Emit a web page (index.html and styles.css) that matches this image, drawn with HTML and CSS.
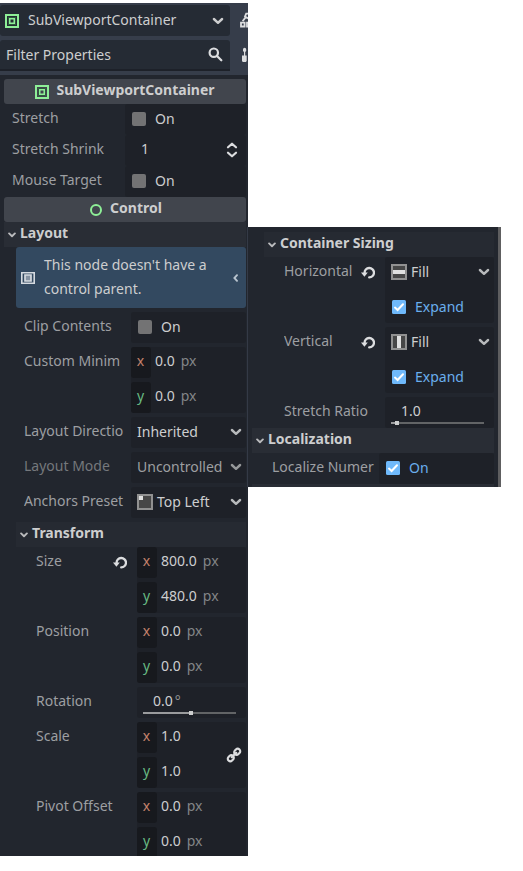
FILE: index.html
```html
<!DOCTYPE html>
<html lang="en">
<head>
<meta charset="utf-8">
<title>Inspector</title>
<link rel="stylesheet" href="styles.css">
</head>
<body>
<svg class="defs" width="0" height="0">
  <symbol id="chev" viewBox="0 0 12 8"><path d="M1.9 2 6 5.8 10.1 2" fill="none" stroke="currentColor" stroke-width="2.4" stroke-linecap="round" stroke-linejoin="round"/></symbol>
  <symbol id="fold" viewBox="0 0 8 6"><path d="M1.1 1.4 4 4.2 6.9 1.4" fill="none" stroke="currentColor" stroke-width="1.9" stroke-linecap="round" stroke-linejoin="round"/></symbol>
  <symbol id="sub" viewBox="0 0 14 14"><path d="M1 1h12v12H1zM4.5 4.5h5v5h-5z" fill="none" stroke="#8eef97" stroke-width="2"/><path d="M3.5 3.5h7v7h-7z" fill="none" stroke="#2d5a3c" stroke-width="1"/></symbol>
  <symbol id="undo" viewBox="0 0 14 13"><path d="M3.6 7A4.7 4.7 0 1 1 8.2 11.4" fill="none" stroke="#dcdddf" stroke-width="2.3" stroke-linecap="round"/><path d="M0 6.5h6.8L3.4 10.8z" fill="#dcdddf"/></symbol>
  <symbol id="tick" viewBox="0 0 14 14"><rect width="14" height="14" rx="1.5" fill="#6fb9fb"/><path d="M3 7.6 5.6 10 11 4.2" fill="none" stroke="#fff" stroke-width="2" stroke-linecap="round"/></symbol>
</svg>
<div class="stage">
  <section class="left">
    <header class="top">
      <div class="picker"><svg width="14" height="14"><use href="#sub"/></svg><span>SubViewportContainer</span><svg class="end" width="12" height="8"><use href="#chev"/></svg></div>
      <svg class="tool-doc" width="8" height="17" viewBox="0 0 8 17"><path d="M1 10.7h3.6v3.8H1zM7 10.7h3v3.8H7z" fill="none" stroke="#dcdddf" stroke-width="1.8"/><path d="M2.6 9.2 5.4 5.6M8 1.6H6.2L5 4.4 8 6.4" fill="none" stroke="#dcdddf" stroke-width="1.8"/></svg>
      <div class="filter"><span>Filter Properties</span><svg class="end" width="15" height="15" viewBox="0 0 15 15"><circle cx="5.8" cy="5.7" r="4.2" fill="none" stroke="#dcdddf" stroke-width="2.2"/><path d="m9 9 4.3 4.2" stroke="#dcdddf" stroke-width="2.3" stroke-linecap="round"/></svg></div>
      <svg class="tool-set" width="8" height="16" viewBox="0 0 8 16"><path d="M3 2.4a1.6 1.6 0 0 1 3.2 0V4L5.2 5v3.5h1.5V14l-.8 1H2.8L2 14V8.500H4V5L3 4z" fill="#dcdddf"/></svg>
    </header>
    <div class="body">
      <h2 class="cat"><svg class="low" width="14" height="14"><use href="#sub"/></svg><span>SubViewportContainer</span></h2>
      <div class="row joined w121"><label>Stretch</label><div class="field check"><i class="box"></i><span>On</span></div></div>
      <div class="row joined w121"><label>Stretch Shrink</label><div class="field num spin"><span>1</span><svg class="end" width="12" height="16" viewBox="0 0 12 16"><path d="m2 5.3 4-3.6 4 3.6M2 10.7l4 3.6 4-3.6" fill="none" stroke="#dcdddf" stroke-width="2.2" stroke-linecap="round" stroke-linejoin="round"/></svg></div></div>
      <div class="row joined w121"><label>Mouse Target</label><div class="field check"><i class="box"></i><span>On</span></div></div>
      <h2 class="cat control"><i class="ring"></i><span>Control</span></h2>
      <h3 class="sec"><svg width="8" height="6"><use href="#fold"/></svg><span>Layout</span></h3>
      <div class="notice"><svg width="14" height="14" viewBox="0 0 14 14"><path d="M.8 1.8h12.4v10.4H.8z" fill="none" stroke="#d5dae0" stroke-width="1.6"/><path d="M4 4h6v6H4z" fill="#8793a2" stroke="#d5dae0" stroke-width="1.7"/></svg><p>This node doesn't have a control parent.</p><svg class="back" width="5" height="8" viewBox="0 0 5 8"><path d="M4 1.2 1.4 4 4 6.8" fill="none" stroke="#b9c4cf" stroke-width="1.9" stroke-linecap="round"/></svg></div>
      <div class="row in1 w115"><label>Clip Contents</label><div class="field check"><i class="box"></i><span>On</span></div></div>
      <div class="row in1 w115 tall"><label>Custom Minim</label><div class="field vec"><div><b class="x">x</b><span>0.0</span><em>px</em></div><div><b class="y">y</b><span>0.0</span><em>px</em></div></div></div>
      <div class="row in1 w115"><label>Layout Directio</label><div class="field option"><span>Inherited</span><svg class="end" width="12" height="8"><use href="#chev"/></svg></div></div>
      <div class="row in1 w115 off"><label>Layout Mode</label><div class="field option"><span>Uncontrolled</span><svg class="end" width="12" height="8"><use href="#chev"/></svg></div></div>
      <div class="row in1 w115"><label>Anchors Preset</label><div class="field option"><svg class="pre" width="16" height="16" viewBox="0 0 16 16"><path d="M1 1h14v14H1z" fill="#474747" stroke="#919191" stroke-width="2"/><path d="M2 2h4v4H2z" fill="#e0e0e0"/></svg><span>Top Left</span><svg class="end" width="12" height="8"><use href="#chev"/></svg></div></div>
      <h3 class="sec nested"><svg width="8" height="6"><use href="#fold"/></svg><span>Transform</span></h3>
      <div class="row in2 w109 tall"><label>Size</label><svg class="undo" width="14" height="13"><use href="#undo"/></svg><div class="field vec"><div><b class="x">x</b><span>800.0</span><em>px</em></div><div><b class="y">y</b><span>480.0</span><em>px</em></div></div></div>
      <div class="row in2 w109 tall"><label>Position</label><div class="field vec"><div><b class="x">x</b><span>0.0</span><em>px</em></div><div><b class="y">y</b><span>0.0</span><em>px</em></div></div></div>
      <div class="row in2 w109"><label>Rotation</label><div class="field num slider"><span>0.0</span><em class="deg">°</em><div class="track mid"><i></i></div></div></div>
      <div class="row in2 w109 tall"><label>Scale</label><div class="field vec"><div><b class="x">x</b><span>1.0</span></div><div><b class="y">y</b><span>1.0</span></div><svg class="link" width="16" height="16" viewBox="0 0 16 16"><g fill="none" stroke="#dcdddf" stroke-width="2.2" stroke-linecap="round"><rect x="-3.2" y="-2.5" width="6.4" height="5" rx="2.5" transform="translate(11.2 4.8) rotate(-45)"/><rect x="-3.2" y="-2.5" width="6.4" height="5" rx="2.5" transform="translate(4.8 11.2) rotate(-45)"/><path d="m5.8 10.2 4.4-4.4"/></g></svg></div></div>
      <div class="row in2 w109 tall"><label>Pivot Offset</label><div class="field vec"><div><b class="x">x</b><span>0.0</span><em>px</em></div><div><b class="y">y</b><span>0.0</span><em>px</em></div></div></div>
    </div>
  </section>
  <section class="right">
    <h3 class="sec nested"><svg width="8" height="6"><use href="#fold"/></svg><span>Container Sizing</span></h3>
    <div class="row in2 w109 tall"><label>Horizontal</label><svg class="undo" width="14" height="13"><use href="#undo"/></svg><div class="field stack"><div class="option"><svg class="pre" width="16" height="16" viewBox="0 0 16 16"><path d="M1 1h14v14H1z" fill="#474747" stroke="#919191" stroke-width="2"/><path d="M2 6h12v4H2z" fill="#e0e0e0"/></svg><span>Fill</span><svg class="end" width="12" height="8"><use href="#chev"/></svg></div><div class="check on"><svg width="14" height="14"><use href="#tick"/></svg><span>Expand</span></div></div></div>
    <div class="row in2 w109 tall"><label>Vertical</label><svg class="undo" width="14" height="13"><use href="#undo"/></svg><div class="field stack"><div class="option"><svg class="pre" width="16" height="16" viewBox="0 0 16 16"><path d="M1 1h14v14H1z" fill="#474747" stroke="#919191" stroke-width="2"/><path d="M6 2h4v12H6z" fill="#e0e0e0"/></svg><span>Fill</span><svg class="end" width="12" height="8"><use href="#chev"/></svg></div><div class="check on"><svg width="14" height="14"><use href="#tick"/></svg><span>Expand</span></div></div></div>
    <div class="row in2 w109 joined"><label>Stretch Ratio</label><div class="field num slider"><span>1.0</span><div class="track low-value"><i></i></div></div></div>
    <h3 class="sec"><svg width="8" height="6"><use href="#fold"/></svg><span>Localization</span></h3>
    <div class="row in1 w115 joined"><label>Localize Numer</label><div class="field check on"><svg width="14" height="14"><use href="#tick"/></svg><span>On</span></div></div>
    <div class="next"></div>
  </section>
</div>
</body>
</html>
```
FILE: styles.css
```css
* { box-sizing: border-box; }
body { margin: 0; background: #fff; font: 14px/19px "Noto Sans", sans-serif; color: #cdcecf; }
.defs { position: absolute; }
svg { display: block; flex: none; overflow: hidden; }
h2, h3, p { margin: 0; font-size: 14px; }
em { font-style: normal; }
.stage { display: flex; align-items: flex-start; width: 523px; height: 871px; padding-top: 3px; overflow: hidden; }

.left { width: 248px; height: 853px; overflow: hidden; background: #22262e; }
.top { display: grid; grid-template-columns: 230px 18px; grid-template-rows: 31px 31px; row-gap: 4px; height: 72px; padding-top: 2px; background: #363d4a; }
.picker, .filter { display: flex; align-items: center; background: #252b34; border-radius: 3px; }
.picker { padding: 0 6px 0 5px; }
.picker span { margin-left: 9px; padding-bottom: 2px; }
.filter { padding: 0 7px 0 6px; border-bottom: 2px solid #1d2129; border-radius: 3px 3px 0 0; }
.end { margin-left: auto; color: #cdcecf; }
.tool-doc { margin: 7px 0 0 10px; }
.tool-set { margin: 7px 0 0 10px; }
.body { padding: 4px 2px 0 4px; }

.cat { display: flex; justify-content: center; height: 25px; background: #41454d; border-radius: 3px; line-height: 21px; }
.cat span { margin-left: 7px; }
.cat .low { margin-top: 6px; }
.control { padding-left: 2px; }
.control span { margin-left: 8px; }
.ring { width: 12px; height: 12px; margin-top: 7px; border: 2px solid #8eef97; border-radius: 50%; }
.sec { display: flex; height: 25px; padding-left: 4px; background: #292d35; line-height: 21px; }
.sec svg { margin: 10px 4px 0 0; color: #babbbd; }
.sec.nested { margin-left: 12px; background: #262a32; }

.notice { display: flex; align-items: center; height: 61px; margin: 0 0 4px 12px; padding: 0 8px 0 5px; background: #334960; border-radius: 3px; line-height: 24px; }
.notice p { width: 180px; margin-left: 9px; padding-bottom: 1px; }
.notice .back { margin-left: auto; }

.row { display: flex; height: 31px; margin-bottom: 4px; padding-left: 8px; }
.row.tall { height: 66px; }
.row.joined { margin-bottom: 0; }
.row.in1 { padding-left: 20px; }
.row.in2 { padding-left: 32px; }
.row label { flex: 1; min-width: 0; line-height: 27px; color: #9d9fa2; white-space: nowrap; overflow: hidden; }
.row .undo { margin: 9px 10px 0 0; }
.field { position: relative; flex: none; background: #1e2128; border-radius: 3px; line-height: 29px; }
.w121 .field { width: 121px; }
.w115 .field { width: 115px; }
.w109 .field { width: 109px; }
.check { display: flex; height: 31px; padding-left: 7px; }
.check > svg, .box { width: 14px; height: 14px; margin: 8px 9px 0 0; }
.box { background: #737374; border-radius: 2px; }
.check.on { color: #6aaeed; }
.option { display: flex; height: 31px; padding: 0 4px 0 6px; }
.option .pre { margin: 7px 4px 0 0; }
.option .end { margin-top: 11px; color: #b8babc; }
.off .field { color: #9d9fa1; }
.stack .check { margin-top: 4px; }
.off label { color: #75787c; }
.off .end { color: #96989a; }
.num { display: flex; padding-left: 16px; line-height: 27px; }
.spin { padding-right: 8px; }
.spin .end { margin-top: 7px; }
.deg { margin-left: 2px; color: #909294; }
.track { position: absolute; left: 6px; bottom: 4px; width: 93px; height: 2px; background: #626466; }
.track i { position: absolute; top: -1px; width: 4px; height: 4px; background: #cdcecf; }
.mid { background: linear-gradient(90deg, #9a9b9d 50%, #626466 50%); }
.mid i { left: 46px; }
.low-value { background: linear-gradient(90deg, #9a9b9d 5%, #626466 5%); }
.low-value i { left: 4px; }
.vec > div { display: flex; height: 31px; line-height: 27px; }
.vec > div + div { margin-top: 4px; }
.vec b { width: 20px; margin-right: 4px; padding-right: 1px; background: #17191e; border-radius: 3px; font-weight: 400; line-height: 28px; text-align: center; }
.vec em { margin-left: 6px; color: #838587; }
.x { color: #c4816c; }
.y { color: #67b983; }
.link { position: absolute; right: 4px; top: 25px; }

.right { width: 254px; height: 260px; margin: 224px 0 0 -1px; padding: 5px 4px 0 4px; background: #22262e; border-left: 1px solid #343a46; border-right: 3px solid #5e5e60; }
.next { height: 3px; background: #292d35; }
```
